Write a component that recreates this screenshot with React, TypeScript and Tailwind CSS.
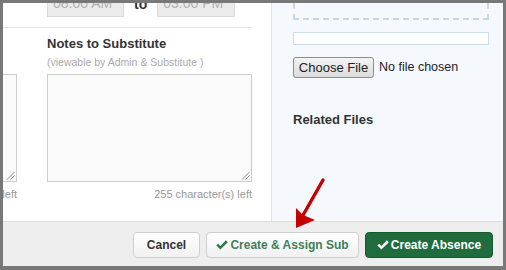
import React from "react";

function Check({ className }: { className?: string }) {
  return (
    <svg viewBox="0 0 12 10" className={className} fill="currentColor">
      <path d="M0.3 5.6 L2.2 3.7 L4.4 5.9 L9.9 0.3 L11.8 2.2 L4.4 9.6 Z" />
    </svg>
  );
}

function Grip() {
  return (
    <svg viewBox="0 0 9 9" className="absolute bottom-[1px] right-[1px] h-[9px] w-[9px]" stroke="#8a8a8a" strokeWidth="1">
      <line x1="1" y1="8.5" x2="8.5" y2="1" />
      <line x1="4.5" y1="8.5" x2="8.5" y2="4.5" />
    </svg>
  );
}

function CharCount() {
  return (
    <p className="mt-[6px] text-right text-[11px] leading-[13px] text-[#9a9a9a]">
      255 character(s) left
    </p>
  );
}

export default function App() {
  return (
    <div className="relative w-[506px] h-[270px] bg-[#787878] pt-[3px] pl-[3px] pr-[3px] pb-[4px] font-['Liberation_Sans',Arial,sans-serif]">
      <div className="flex h-full flex-col bg-white">
        {/* main body */}
        <div className="flex flex-1 overflow-hidden">
          {/* left column */}
          <div className="w-[268px] shrink-0 overflow-hidden">
            {/* time row */}
            <div className="flex h-[25px] w-[249px] items-end border-b border-[#e6e6e6] pb-[10px] pl-[44px]">
              <div className="h-[27px] w-[77px] shrink-0 border border-[#dadada] bg-[#ebebeb] pl-[5px] text-[14px] leading-[25px] text-[#b2b2b2]">
                08:00 AM
              </div>
              <span className="mx-[10px] mb-[5px] text-[14px] font-bold leading-[16px] text-[#333]">to</span>
              <div className="h-[27px] w-[78px] shrink-0 border border-[#dadada] bg-[#ebebeb] pl-[5px] text-[14px] leading-[25px] text-[#b2b2b2]">
                03:00 PM
              </div>
            </div>

            <div className="flex">
              {/* previous column, mostly cut off */}
              <div className="-ml-[191px] mr-[30px] w-[205px] shrink-0 pt-[46px]">
                <div className="relative h-[108px] border border-[#cccccc] bg-[#fafafa]">
                  <Grip />
                </div>
                <CharCount />
              </div>

              {/* notes to substitute */}
              <div className="w-[205px] shrink-0 pt-[8px]">
                <h3 className="text-[13px] font-bold leading-[15px] text-[#333]">Notes to Substitute</h3>
                <p className="mt-[5px] text-[10.5px] leading-[12px] text-[#aaaaaa]">(viewable by Admin &amp; Substitute )</p>
                <div className="relative mt-[6px] h-[108px] border border-[#cccccc] bg-[#fafafa]">
                  <Grip />
                </div>
                <CharCount />
              </div>
            </div>
          </div>

          {/* right panel */}
          <div className="flex-1 border-l border-[#d9e6f2] bg-[#f5f9fd] pl-[21px] pr-[14px]">
            <div className="-mt-[23px] h-[40px] border-2 border-dashed border-[#c9d5e1]" />
            <div className="mt-[12px] h-[13px] border border-[#cddcec] bg-white" />
            <div className="mt-[12px] flex items-center">
              <button className="h-[21px] w-[81px] rounded-[3px] border border-[#8c8c8c] bg-gradient-to-b from-[#f4f4f4] to-[#dcdcdc] text-[13px] leading-[19px] text-[#222]">
                Choose File
              </button>
              <span className="ml-[5px] text-[12.5px] text-[#222]">No file chosen</span>
            </div>
            <h3 className="mt-[34px] text-[13px] font-bold leading-[15px] text-[#333]">Related Files</h3>
          </div>
        </div>

        {/* footer */}
        <div className="flex h-[45px] shrink-0 items-start justify-end gap-[6px] border-t border-[#dcdcdc] bg-[#eeeeee] pr-[10px] pt-[10px]">
          <button className="h-[26px] w-[67px] rounded-[4px] border border-[#cfcfcf] bg-gradient-to-b from-white to-[#f1f1f1] text-[12px] font-bold text-[#333]">
            Cancel
          </button>
          <button className="flex h-[26px] w-[153px] items-center justify-center gap-[2px] rounded-[4px] border border-[#cfcfcf] bg-gradient-to-b from-white to-[#f1f1f1] text-[12px] font-bold text-[#3d7f5a]">
            <Check className="h-[10px] w-[12px] text-[#2f7a4a]" />
            Create &amp; Assign Sub
          </button>
          <button className="flex h-[26px] w-[128px] items-center justify-center gap-[2px] rounded-[4px] border border-[#175a32] bg-[#206c3f] text-[12px] font-bold text-white">
            <Check className="h-[10px] w-[12px] text-white" />
            Create Absence
          </button>
        </div>
      </div>

      {/* annotation arrow */}
      <svg className="absolute left-0 top-0 h-[270px] w-[506px] pointer-events-none" viewBox="0 0 506 270">
        <line x1="323" y1="180" x2="302" y2="217" stroke="#c40000" strokeWidth="3.4" strokeLinecap="round" />
        <polygon points="296,228 296,208 303,215 315,220" fill="#c40000" />
      </svg>
    </div>
  );
}
